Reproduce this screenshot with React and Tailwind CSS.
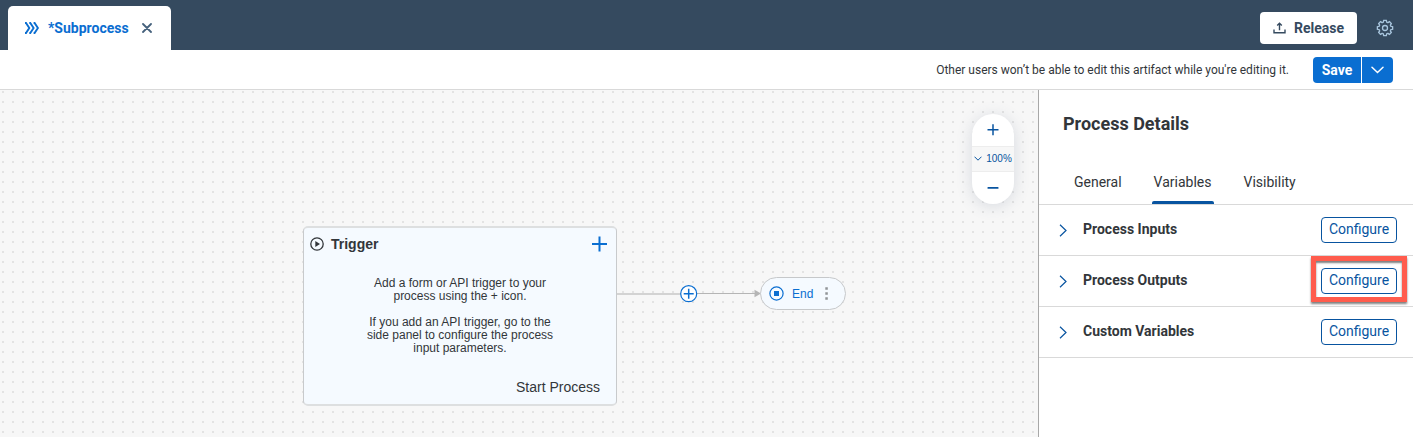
import React from "react";

function ProcessIcon() {
  return (
    <svg width="16" height="12" viewBox="0 0 16 12" fill="none" stroke="#0a6ed1" strokeWidth="1.9" aria-hidden="true">
      <path d="M1 1h1l3.300 5L2 11H1M5.300 1h1l3.300 5-3.300 5h-1M9.600 1h1l3.300 5-3.300 5h-1" />
    </svg>
  );
}

function CloseIcon() {
  return (
    <svg width="10" height="10" viewBox="0 0 10 10" stroke="#45617c" strokeWidth="1.8" strokeLinecap="round" aria-hidden="true">
      <path d="M1 1l8 8M9 1L1 9" />
    </svg>
  );
}

function ReleaseIcon() {
  return (
    <svg width="13" height="12" viewBox="0 0 13 12" fill="none" stroke="#354a5f" strokeWidth="1.4" aria-hidden="true">
      <path d="M1 7.500v3.300h11V7.500M6.500 8.300V1.500M4.200 3.500l2.300-2.300 2.300 2.300" />
    </svg>
  );
}

const GEAR_TEETH = [0, 45, 90, 135, 180, 225, 270, 315];

function GearIcon() {
  return (
    <svg width="18" height="18" viewBox="0 0 18 18" fill="none" aria-hidden="true">
      <g fill="#a9c6de">
        {GEAR_TEETH.map((angle) => (
          <path key={angle} d="M6.400 3.600L7.200 0.700H10.800L11.600 3.600z" transform={`rotate(${angle} 9 9)`} />
        ))}
      </g>
      <circle cx="9" cy="9" r="6.400" fill="#a9c6de" />
      <g fill="#354a5f">
        {GEAR_TEETH.map((angle) => (
          <path key={angle} d="M7.600 4.600L8.300 2H9.700L10.400 4.600z" transform={`rotate(${angle} 9 9)`} />
        ))}
      </g>
      <circle cx="9" cy="9" r="5.400" fill="#354a5f" />
      <circle cx="9" cy="9" r="2.500" stroke="#a9c6de" strokeWidth="1.3" />
    </svg>
  );
}

function TopBar() {
  return (
    <header className="flex h-[50px] items-end justify-between bg-[#354a5f] pl-2 pr-[19px]">
      <div className="flex h-11 items-center gap-2 rounded-t-[5px] bg-white pl-4 pr-[19px]">
        <ProcessIcon />
        <a href="#subprocess" className="text-sm font-bold text-[#0a6ed1]">*Subprocess</a>
        <button type="button" aria-label="Close tab" className="ml-[5px]">
          <CloseIcon />
        </button>
      </div>
      <div className="flex items-center gap-[19px] pb-1.5">
        <button type="button" className="flex h-8 items-center gap-2 rounded-[4px] bg-white px-[13px] text-sm font-bold text-[#354a5f]">
          <ReleaseIcon />
          Release
        </button>
        <button type="button" aria-label="Settings">
          <GearIcon />
        </button>
      </div>
    </header>
  );
}

function Toolbar() {
  return (
    <div className="flex h-10 items-center justify-end gap-6 border-b border-[#d9d9d9] bg-white pr-5">
      <p className="text-xs text-[#32363a]">Other users won’t be able to edit this artifact while you're editing it.</p>
      <div className="flex gap-px">
        <button type="button" className="h-[26px] w-12 rounded-l-[4px] bg-[#0a6ed1] text-sm font-bold text-white">
          Save
        </button>
        <button type="button" aria-label="More save options" className="flex h-[26px] w-[31px] items-center justify-center rounded-r-[4px] bg-[#0a6ed1]">
          <svg width="13" height="8" viewBox="0 0 13 8" fill="none" stroke="#fff" strokeWidth="1.500" strokeLinecap="round" aria-hidden="true">
            <path d="M1 1.200l5.500 5.300L12 1.200" />
          </svg>
        </button>
      </div>
    </div>
  );
}

function ZoomControl() {
  return (
    <div className="absolute right-6 top-6 flex w-[42px] flex-col overflow-hidden rounded-full bg-white text-[#0854a0] shadow-[0_2px_16px_rgba(70,90,120,0.18)]">
      <button type="button" aria-label="Zoom in" className="flex h-8 items-center justify-center">
        <svg width="12" height="12" viewBox="0 0 12 12" stroke="currentColor" strokeWidth="1.500" aria-hidden="true">
          <path d="M6 0.300v11M0.500 5.800h11" />
        </svg>
      </button>
      <button type="button" className="flex h-[26px] items-center justify-center gap-1 border-y border-[#ededed] bg-[#f7f7f7] pb-px font-[Liberation_Sans,sans-serif] text-[10px]">
        <svg width="8" height="5" viewBox="0 0 8 5" fill="none" stroke="currentColor" aria-hidden="true">
          <path d="M0.500 0.700L4 4.200 7.500 0.700" />
        </svg>
        100%
      </button>
      <button type="button" aria-label="Zoom out" className="flex h-8 items-center justify-center">
        <svg width="12" height="2" viewBox="0 0 12 2" fill="currentColor" aria-hidden="true">
          <rect x="0.500" width="11" height="1.700" rx="0.500" />
        </svg>
      </button>
    </div>
  );
}

function TriggerCard() {
  return (
    <section className="absolute left-[303px] top-[136px] flex h-[180px] w-[314px] flex-col rounded-[5px] border-x border-y-2 border-x-[#c8cacc] border-y-[#dddfe0] bg-[#f5faff] px-4 pb-[7px] pt-1.5">
      <div className="-ml-2.5 -mr-2 flex h-5 items-center gap-[7px]">
        <svg width="14" height="14" viewBox="0 0 14 14" fill="none" aria-hidden="true">
          <circle cx="7" cy="7" r="6.200" stroke="#32363a" strokeWidth="1.300" />
          <path d="M5.300 4L10 7 5.300 10z" fill="#32363a" />
        </svg>
        <h2 className="text-sm font-bold">Trigger</h2>
        <button type="button" aria-label="Add trigger" className="ml-auto text-[#0a6ed1]">
          <svg width="16" height="16" viewBox="0 0 16 16" stroke="currentColor" strokeWidth="2" aria-hidden="true">
            <path d="M7.500 0.500v15M0 8h15" />
          </svg>
        </button>
      </div>
      <div className="mt-[23px] flex flex-col gap-[13px] text-center text-xs leading-[13px]">
        <p>
          Add a form or API trigger to your
          <br />
          process using the + icon.
        </p>
        <p>
          If you add an API trigger, go to the
          <br />
          side panel to configure the process
          <br />
          input parameters.
        </p>
      </div>
      <p className="mt-auto text-right text-sm">Start Process</p>
    </section>
  );
}

function Connector() {
  return (
    <svg className="absolute left-[617px] top-[194px]" width="146" height="20" viewBox="0 0 146 20" fill="none" aria-hidden="true">
      <path d="M0 10h64" stroke="#d3d3d3" strokeWidth="2" />
      <path d="M80 9.500h60" stroke="#b5b5b5" />
      <path d="M137.500 5.800L144 9.500l-6.500 3.700z" fill="#b5b5b5" />
      <circle cx="71.700" cy="9.700" r="8" fill="#fff" stroke="#0a6ed1" strokeWidth="1.200" />
      <path d="M71.700 4.700v10M66.700 9.700h10" stroke="#0a6ed1" strokeWidth="1.500" />
    </svg>
  );
}

function EndNode() {
  return (
    <div className="absolute left-[760px] top-[187px] flex h-[33px] w-[86px] items-center rounded-full border border-[#c6c8ca] bg-[#f5faff] pl-2 pr-[17px] text-[#0a6ed1]">
      <svg width="15" height="15" viewBox="0 0 15 15" fill="none" aria-hidden="true">
        <circle cx="7.500" cy="7.500" r="6.600" stroke="#0a6ed1" strokeWidth="1.200" />
        <rect x="5" y="5" width="5" height="5" fill="#0a6ed1" />
      </svg>
      <span className="ml-2 text-xs">End</span>
      <button type="button" aria-label="End options" className="ml-auto">
        <svg width="3" height="13" viewBox="0 0 3 13" fill="#919497" aria-hidden="true">
          <path d="M0.300 0.200h2.500v2.500H0.300zM0.300 5.200h2.500v2.500H0.300zM0.300 10.200h2.500v2.500H0.300z" />
        </svg>
      </button>
    </div>
  );
}

function Canvas() {
  return (
    <main className="relative min-w-0 flex-1 overflow-hidden bg-[#f7f7f7] bg-[conic-gradient(from_270deg_at_2px_2px,#e3e3e3_90deg,transparent_0)] bg-[length:10px_10px] bg-[position:2px_1px] font-[Liberation_Sans,sans-serif] text-[#32363a]">
      <Connector />
      <TriggerCard />
      <EndNode />
      <ZoomControl />
    </main>
  );
}

const TABS = ["General", "Variables", "Visibility"];

const SECTIONS = [
  { title: "Process Inputs" },
  { title: "Process Outputs", highlighted: true },
  { title: "Custom Variables" },
];

function DetailsPanel() {
  return (
    <aside className="w-[375px] shrink-0 border-l border-[#a8a8a8] bg-white">
      <h1 className="px-6 pt-[22px] text-lg leading-6 font-bold">Process Details</h1>
      <nav className="mt-6 flex h-[45px] gap-3 border-b border-[#d9d9d9] px-[25px]">
        {TABS.map((tab) => (
          <button
            key={tab}
            type="button"
            aria-current={tab === "Variables" ? "page" : undefined}
            className="relative px-2.5 text-sm"
          >
            {tab}
            {tab === "Variables" && <span className="absolute inset-x-2 bottom-0 h-[3px] rounded-t-[2px] bg-[#0854a0]" />}
          </button>
        ))}
      </nav>
      {SECTIONS.map(({ title, highlighted }) => (
        <section key={title} className="flex h-[51px] items-center border-b border-[#d9d9d9] pl-5 pr-4">
          <button type="button" className="flex items-center gap-4 text-sm font-bold">
            <svg width="8" height="13" viewBox="0 0 8 13" fill="none" stroke="#0854a0" strokeWidth="1.200" aria-hidden="true">
              <path d="M1 0.800l6 5.700-6 5.700" />
            </svg>
            <span className="pb-0.5">{title}</span>
          </button>
          <div className="relative ml-auto">
            <button type="button" aria-label={`Configure ${title}`} className="block h-[26px] w-[76px] rounded-[4px] border border-[#0854a0] pb-0.5 text-sm leading-5 text-[#0854a0]">
              Configure
            </button>
            {highlighted && (
              <span className="pointer-events-none absolute -inset-x-2.5 -bottom-2 -top-3 border-5 border-[#ff5c4d] shadow-[0_2px_2px_rgba(0,0,0,0.5),inset_0_2px_2px_rgba(0,0,0,0.5)]" />
            )}
          </div>
        </section>
      ))}
    </aside>
  );
}

export default function App() {
  return (
    <div className="flex min-h-screen flex-col bg-white font-[Roboto,sans-serif] text-[#32363a]">
      <TopBar />
      <Toolbar />
      <div className="flex flex-1">
        <Canvas />
        <DetailsPanel />
      </div>
    </div>
  );
}
